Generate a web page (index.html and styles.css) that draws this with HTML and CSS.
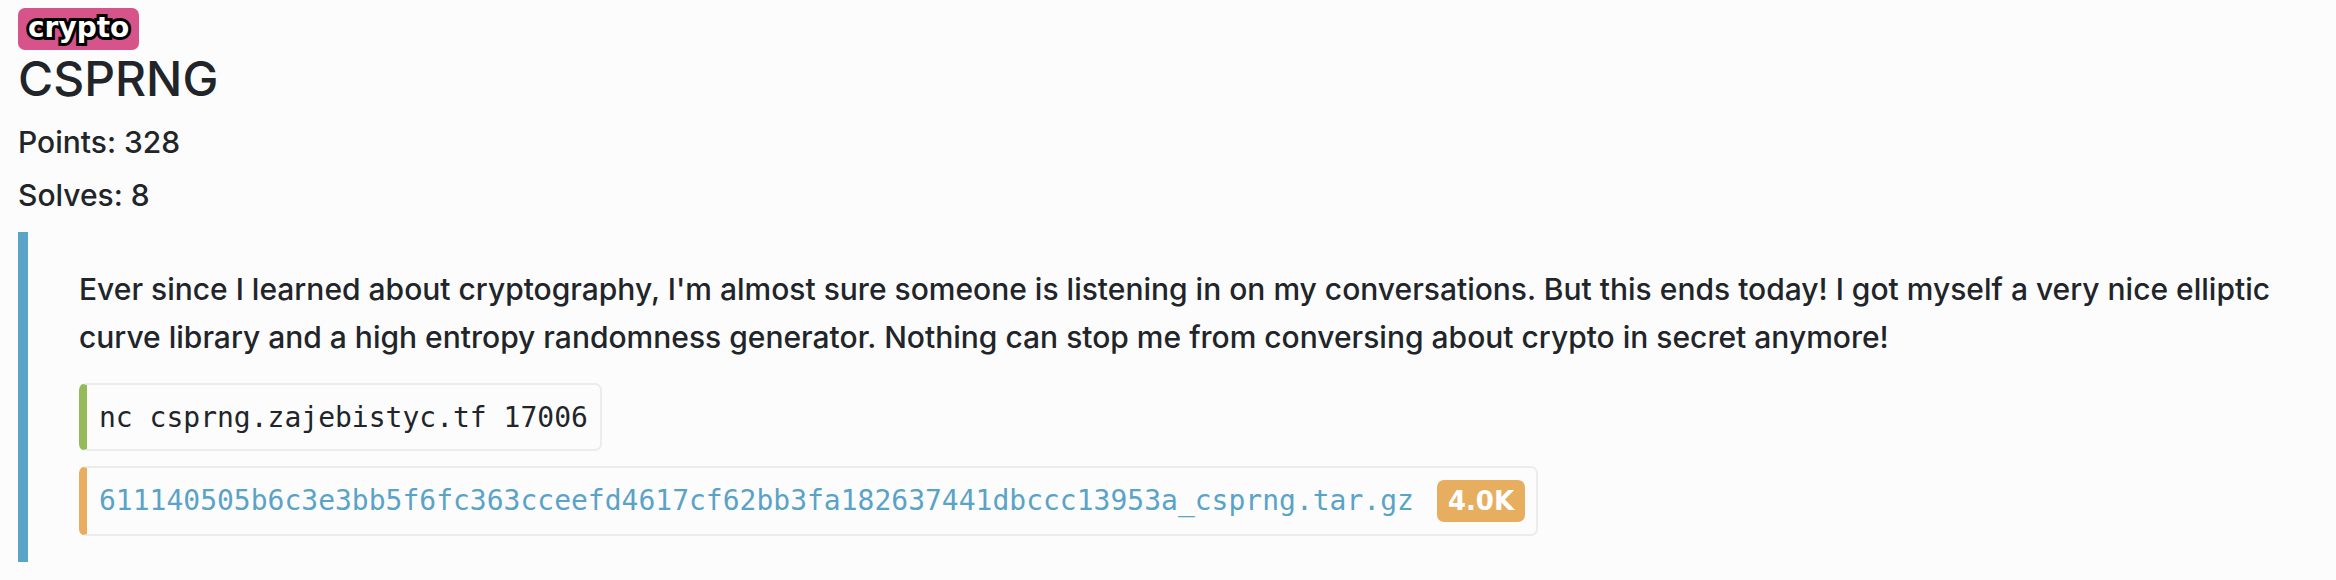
FILE: index.html
```html
<!DOCTYPE html>
<html>
<head>
<meta charset="utf-8">
<link rel="stylesheet" href="styles.css">
</head>
<body>
<div class="page">
  <span class="cat">crypto</span>
  <h1 class="title">CSPRNG</h1>
  <div class="stat">Points: 328</div>
  <div class="stat">Solves: 8</div>
  <div class="desc">
    <p class="text">Ever since I learned about cryptography, I'm almost sure someone is listening in on my conversations. But this ends today! I got myself a very nice elliptic curve library and a high entropy randomness generator. Nothing can stop me from conversing about crypto in secret anymore!</p>
    <div class="box box-cmd"><code>nc csprng.zajebistyc.tf 17006</code></div>
    <div class="box box-file"><a class="file" href="#">611140505b6c3e3bb5f6fc363cceefd4617cf62bb3fa182637441dbccc13953a_csprng.tar.gz</a><span class="size">4.0K</span></div>
  </div>
</div>
</body>
</html>
```
FILE: styles.css
```css
html, body {
  margin: 0;
  padding: 0;
  background: #fcfcfc;
}
.page {
  padding: 8px 18px 0 18px;
  font-family: Inter, "Noto Sans", sans-serif;
  font-weight: 500;
  color: #212529;
  display: flex;
  flex-direction: column;
  align-items: flex-start;
}
.cat {
  display: inline-block;
  height: 42px;
  line-height: 40px;
  padding: 0 10px;
  background: #d6548a;
  border-radius: 7px;
  font-family: "DejaVu Sans", sans-serif;
  font-weight: 700;
  font-size: 28px;
  color: #fff;
  -webkit-text-stroke: 6px #000;
  paint-order: stroke fill;
  box-sizing: border-box;
}
.title {
  margin: 0 0 12px 0;
  font-size: 48px;
  font-weight: 500;
  line-height: 57.6px;
}
.stat {
  font-size: 30px;
  line-height: 45px;
  margin-bottom: 8px;
}
.desc {
  align-self: stretch;
  margin-top: 6px;
  border-left: 10px solid #5aa4c8;
  padding: 33px 0 26px 51px;
  display: flex;
  flex-direction: column;
  align-items: flex-start;
}
.text {
  margin: 0 0 22px 0;
  font-size: 30px;
  line-height: 48px;
}
.box {
  display: flex;
  align-items: center;
  border: 2px solid #ececec;
  border-left: 8px solid #94ba5a;
  border-radius: 7px;
  padding: 16px 12px 15px 12px;
  font-family: "DejaVu Sans Mono", monospace;
  font-weight: 400;
  font-size: 28px;
  background: #fcfcfc;
}
.box code {
  font-family: inherit;
  color: #212529;
}
.box-cmd {
  margin-bottom: 15px;
}
.box-file {
  border-left-color: #e8ad5e;
  padding-top: 12px;
  padding-bottom: 12px;
  padding-right: 11px;
}
.file {
  color: #5aa3c8;
  text-decoration: none;
}
.size {
  margin-left: 23px;
  background: #e8ae5f;
  color: #fff;
  font-family: "DejaVu Sans", sans-serif;
  font-weight: 700;
  font-size: 26px;
  height: 42px;
  line-height: 42px;
  padding: 0 11px;
  border-radius: 7px;
}
```
